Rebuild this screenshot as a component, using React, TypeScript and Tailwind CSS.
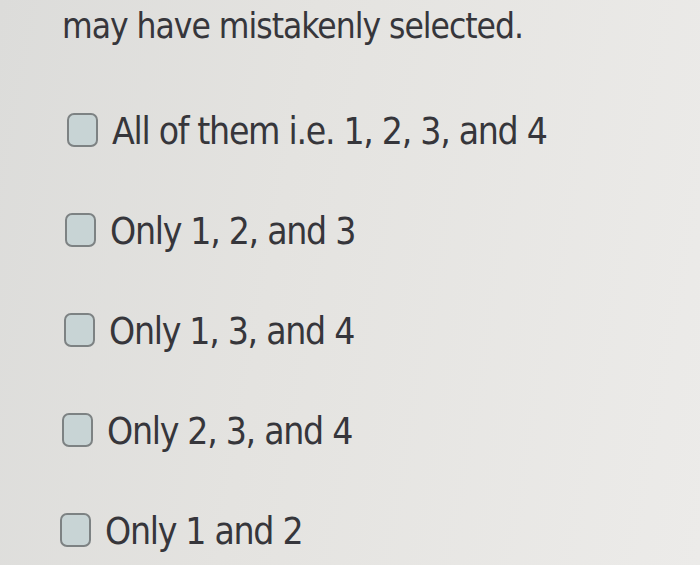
import React from "react";

const options = [
  { t: "All of them i.e. 1, 2, 3, and 4", c: "ml-[67px]" },
  { t: "Only 1, 2, and 3", c: "ml-[65px]" },
  { t: "Only 1, 3, and 4", c: "ml-[64px]" },
  { t: "Only 2, 3, and 4", c: "ml-[62px]" },
  { t: "Only 1 and 2", c: "ml-[60px]" },
];

export default function App() {
  return (
    <div
      className="w-[700px] h-[565px] overflow-hidden bg-[linear-gradient(100deg,#dcdcda_0%,#e4e3e0_40%,#ecebe9_100%)] text-[#36363b]"
      style={{ fontFamily: '"Comic Sans MS", "DejaVu Sans Condensed", "DejaVu Sans", sans-serif' }}
    >
      <div className="pl-[62px] pt-[4px] text-[35px] leading-[44px] tracking-[-1px]">
        may have mistakenly selected.
      </div>
      <div className="flex flex-col gap-[56px] pt-[62px]">
        {options.map((o) => (
          <div key={o.t} className={`flex items-center gap-[14px] h-[44px] ${o.c}`}>
            <div className="w-[31px] h-[34px] rounded-[7px] border-2 border-[#7d8283] bg-[#c8d4d5] -mt-[4px]" />
            <span className="text-[37px] leading-[44px] tracking-[-1.3px]">{o.t}</span>
          </div>
        ))}
      </div>
    </div>
  );
}
